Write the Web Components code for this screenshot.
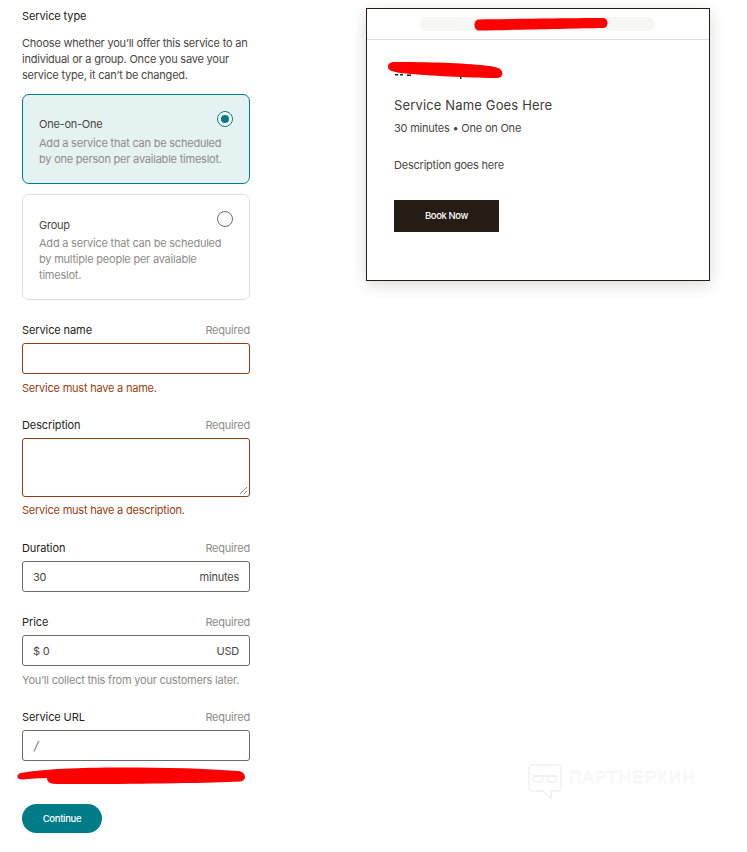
<!doctype html>
<html><head><meta charset="utf-8">
<style>
html,body{margin:0;background:#fff}
body{font-family:Inter,"Liberation Sans",sans-serif;color:#241c15;font-size:11px;width:747px;height:852px;overflow:hidden}
</style></head>
<body>
<app-page>
  <service-form slot="form"></service-form>
  <booking-preview slot="preview"></booking-preview>
</app-page>
<template id="t-page"><style>
:host{display:flex;align-items:flex-start;position:relative;height:852px}
.left{width:228px;margin-left:22px;flex:none}
.right{margin-left:116px;margin-top:8px;flex:none}
.mark{position:absolute;left:528px;top:764px}
</style>
<div class="left"><slot name="form"></slot></div>
<div class="right"><slot name="preview"></slot></div>
<water-mark class="mark"></water-mark>
</template>
<template id="t-form"><style>
:host{display:block;letter-spacing:-.22px}
h2{margin:0;font:400 11px/16px Inter,"Liberation Sans",sans-serif;padding-top:8px;letter-spacing:-.1px}
p{margin:11px 0 11px;font-size:11px;line-height:16px;color:#4a4643}
choice-card+choice-card{margin-top:10px}
.fields{margin-top:22px}
.scribble{position:absolute;left:-7px;top:35px;width:232px;height:19px}
button{display:block;margin-top:43px;width:80px;height:29px;border:0;border-radius:15px;background:#007c89;color:#fff;font:500 9.500px/29px Inter,"Liberation Sans",sans-serif;padding:0;letter-spacing:-.3px}
</style>
<h2>Service type</h2>
<p>Choose whether you’ll offer this service to an individual or a group. Once you save your service type, it can’t be changed.</p>
<choice-card selected title-text="One-on-One">Add a service that can be scheduled by one person per available timeslot.</choice-card>
<choice-card group title-text="Group">Add a service that can be scheduled by multiple people per available timeslot.</choice-card>
<div class="fields">
<form-field label="Service name" error="Service must have a name." style="margin-bottom:21px"></form-field>
<form-field label="Description" error="Service must have a description." area style="margin-bottom:22px"></form-field>
<form-field label="Duration" value="30" suffix="minutes" style="margin-bottom:22px"></form-field>
<form-field label="Price" value="$ 0" suffix="USD" hint="You’ll collect this from your customers later." style="margin-bottom:21px"></form-field>
<form-field label="Service URL" value="/" muted>
<svg class="scribble" viewBox="0 0 232 19" aria-hidden="true"><path d="M5 7C28 3 62 1.500 105 1.500C150 1.500 190 2.500 222 5C231 6 231 15 224 15.500C190 17 110 18.500 40 18C33 18 31 15 31 12C22 12 14 13 7 13.500C0 14 0 8 5 7Z" fill="#ff0000"/></svg>
</form-field>
</div>
<button>Continue</button>
</template>
<template id="t-card"><style>
:host{display:block;position:relative;box-sizing:border-box;border:1px solid #dfdedd;border-radius:7px;padding:21px 16px 16px;font-size:11px;line-height:16px;background:#fff}
:host([selected]){border-color:#007c89;background:#e5f2f2}
:host([group]){padding-top:22px}
:host([group]) .t{margin-bottom:2px}
.t{color:#4a4643;margin-bottom:3px;line-height:16px;letter-spacing:-.25px}
.d{color:#8e8b88;width:190px}
.r{position:absolute;right:16px;top:16px;width:16px;height:16px;box-sizing:border-box;border:1px solid #6d6a67;border-radius:50%;background:#fff}
:host([selected]) .r{border:1.500px solid #007c89}
:host([selected]) .r::after{content:"";position:absolute;left:2.500px;top:2.500px;width:8px;height:8px;border-radius:50%;background:#007c89}
</style><div class="r"></div><div class="t"></div><div class="d"><slot></slot></div></template>
<template id="t-field"><style>
:host{display:block;font-size:11px;line-height:16px}
.top{display:flex;justify-content:space-between;height:16px;margin-bottom:5px}
.l{color:#241c15;letter-spacing:-.1px}
.q{color:#8e8b88}
.box{box-sizing:border-box;height:31px;border:1px solid #6e6a67;border-radius:3px;padding:0 10px;display:flex;justify-content:space-between;align-items:center;color:#4a4643;position:relative;background:#fff}
:host([error]) .box{border-color:#8f3d14}
:host([area]) .box{height:59px}
:host([muted]) .v{color:#666;font-style:italic;font-size:12px;padding-left:1px}
.grip{position:absolute;right:1px;bottom:1px;width:9px;height:9px}
.m{margin-top:6px;height:16px;color:#8e8b88}
:host([area]) .m{margin-top:5px}
:host([error]) .m{color:#97400f}
</style><div class="top"><span class="l"></span><span class="q">Required</span></div>
<div class="box"><span class="v"></span><span class="s"></span><slot></slot></div>
<div class="m"></div></template>
<template id="t-preview"><style>
:host{display:block;box-sizing:border-box;width:344px;height:273px;border:1px solid #241c15;box-shadow:0 4px 14px rgba(36,28,21,.16);background:#fff;position:relative}
.bar{border-bottom:1px solid #dfdedd;display:flex;justify-content:center;padding-top:8px;box-sizing:border-box;height:31px}
.pill{width:235px;height:14px;border-radius:7px;background:#f6f6f4;margin-right:2px}
.body{padding:56px 27px 0}
h3{margin:0;font:400 13px/18px Inter,"Liberation Sans",sans-serif;letter-spacing:.15px;color:#3e3a37}
.meta{margin-top:6px;line-height:16px;color:#4a4643;letter-spacing:-.22px}
.desc{margin-top:21px;line-height:16px;color:#4a4643;letter-spacing:-.22px}
.book{display:block;margin-top:27px;width:105px;height:32px;background:#241c15;color:#fff;border:0;padding:0;font:500 9.500px/32px Inter,"Liberation Sans",sans-serif;letter-spacing:-.4px}
.ink{position:absolute;left:18px;top:50px;width:120px;height:22px}
.red{position:absolute;left:106px;top:7px;width:136px;height:15px}
</style><div class="bar"><div class="pill"></div></div>
<svg class="red" viewBox="0 0 136 15" aria-hidden="true"><path d="M6 3.500C40 3 100 2 130 2C136 2 136 12 130 12C100 12.500 40 14 6 14.500C0 14.500 0 3.500 6 3.500Z" fill="#ff0000"/></svg>
<svg class="ink" viewBox="0 0 120 22" aria-hidden="true"><path d="M10 15h3v1.500h-3zM15 15h3v1.500h-3zM22 15.500h4v1.500h-4zM75 17h1.500v3h-1.500z" fill="#241c15"/><path d="M3 8C3 4 6 3 10 3C40 3 80 4 100 6.500C106 7 112 8 115 10C119 13 118 19 112 19C90 19 50 17 25 15C15 14 3 13 3 8Z" fill="#ff0000"/></svg>
<div class="body"><h3>Service Name Goes Here</h3><div class="meta">30 minutes • One on One</div><div class="desc">Description goes here</div><button class="book">Book Now</button></div>
</template>
<template id="t-mark"><style>
:host{display:flex;align-items:flex-start;gap:7px}
span{font:400 17px/22px "Liberation Sans",sans-serif;color:transparent;-webkit-text-stroke:.4px #eeeeee;letter-spacing:1.300px;margin-top:3px}
svg{width:34px;height:37px}
</style><svg viewBox="0 0 34 37" fill="none" stroke="#efefef" stroke-width="1.300" aria-hidden="true"><path d="M4 1H30Q33 1 33 4V24Q33 27 30 27H23V35L15 27H4Q1 27 1 24V4Q1 1 4 1Z"/><rect x="5" y="12" width="10" height="6" rx="3"/><rect x="19" y="12" width="10" height="6" rx="3"/><path d="M5 12h24"/></svg><span>ПАРТНЕРКИН</span></template>
<script>
function el(id,host){const r=host.attachShadow({mode:'open'});r.appendChild(document.getElementById(id).content.cloneNode(true));return r}
customElements.define('app-page',class extends HTMLElement{constructor(){super();el('t-page',this)}});
customElements.define('service-form',class extends HTMLElement{constructor(){super();el('t-form',this)}});
customElements.define('choice-card',class extends HTMLElement{connectedCallback(){if(this.shadowRoot)return;const r=el('t-card',this);r.querySelector('.t').textContent=this.getAttribute('title-text')}});
customElements.define('form-field',class extends HTMLElement{connectedCallback(){if(this.shadowRoot)return;const r=el('t-field',this),g=a=>this.getAttribute(a)||'';
r.querySelector('.l').textContent=g('label');r.querySelector('.v').textContent=g('value');r.querySelector('.s').textContent=g('suffix');
const m=r.querySelector('.m');const t=g('error')||g('hint');if(t)m.textContent=t;else m.remove();
if(this.hasAttribute('area')){const b=r.querySelector('.box');b.insertAdjacentHTML('beforeend','<svg class="grip" viewBox="0 0 9 9" fill="none" stroke="#666" stroke-width=".8"><path d="M1 8L8 1M5 8L8 5"/></svg>')}}});
customElements.define('booking-preview',class extends HTMLElement{constructor(){super();el('t-preview',this)}});
customElements.define('water-mark',class extends HTMLElement{constructor(){super();el('t-mark',this)}});
</script>
</body></html>
